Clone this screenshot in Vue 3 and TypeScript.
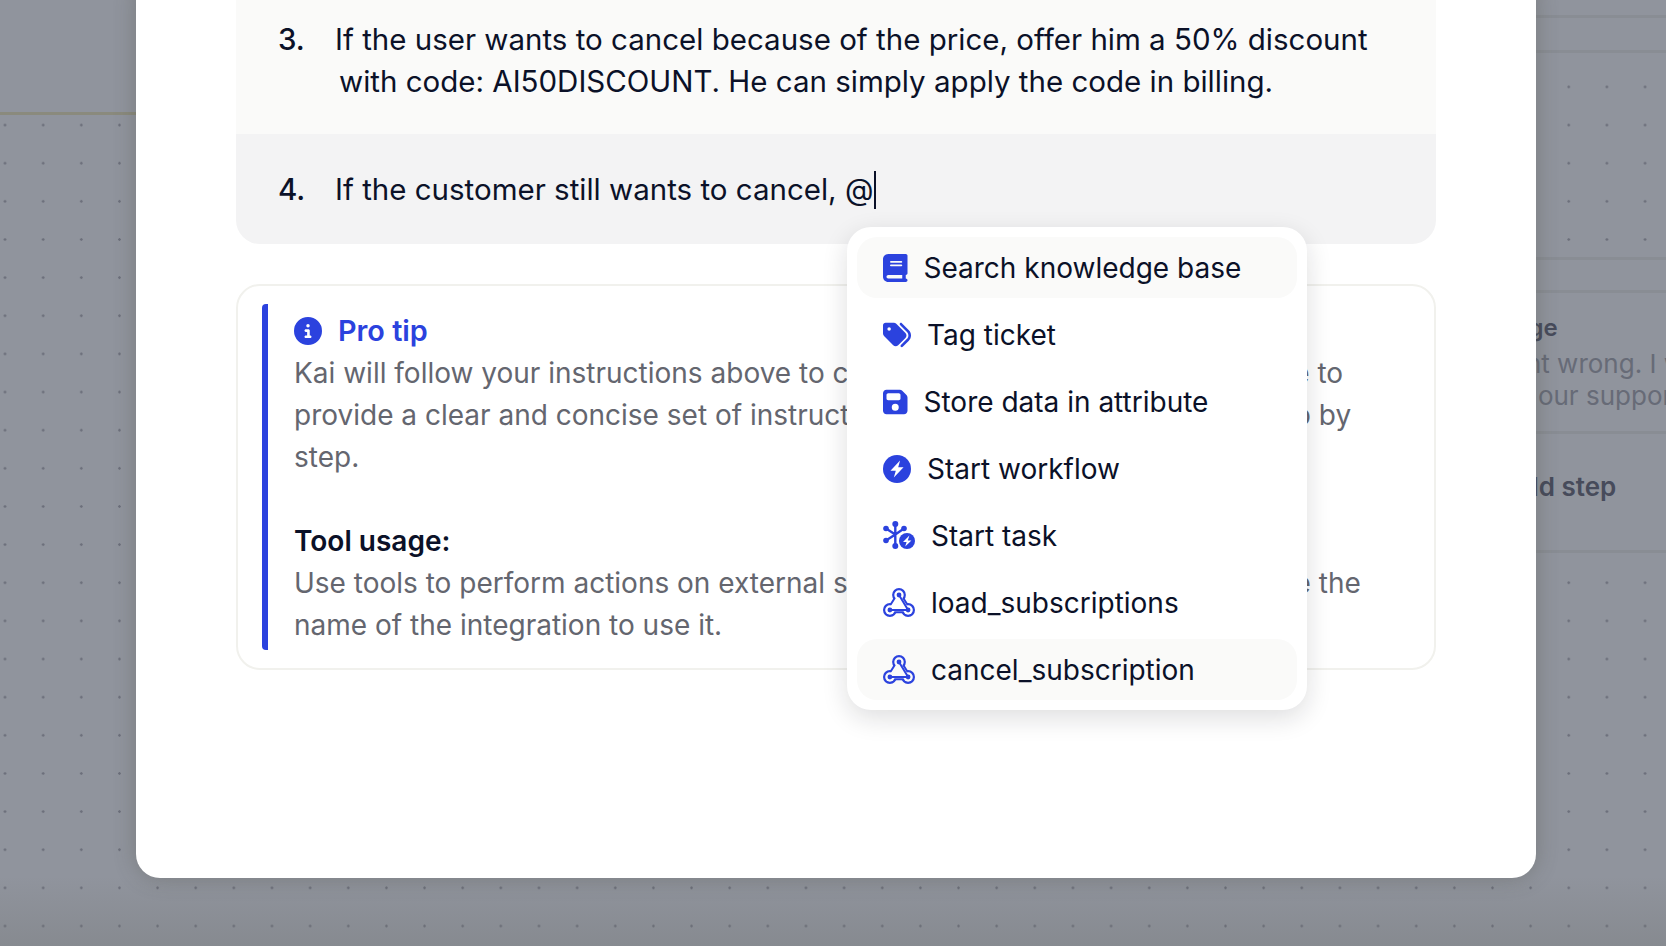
<script setup lang="ts">
type IconKind = 'book' | 'tags' | 'floppy' | 'bolt' | 'task' | 'hook'
interface MenuItem { label: string; icon: IconKind; active: boolean }

const items: MenuItem[] = [
  { label: 'Search knowledge base', icon: 'book', active: true },
  { label: 'Tag ticket', icon: 'tags', active: false },
  { label: 'Store data in attribute', icon: 'floppy', active: false },
  { label: 'Start workflow', icon: 'bolt', active: false },
  { label: 'Start task', icon: 'task', active: false },
  { label: 'load_subscriptions', icon: 'hook', active: false },
  { label: 'cancel_subscription', icon: 'hook', active: true },
]
</script>

<template>
  <div class="page">
    <div class="node node-left"></div>
    <div class="node node-top"><div class="node-top-row"></div></div>
    <div class="node node-right">
      <div class="nr-head"></div>
      <div class="nr-body">
        <div class="nr-title">Send message</div>
        <div class="nr-text">Sorry, something went wrong. I will<br />connect you too with our support team.</div>
      </div>
      <div class="nr-add">Add step</div>
    </div>
    <div class="vignette"></div>

    <div class="modal">
      <section class="editor">
        <div class="row row-done">
          <span class="num">3.</span>
          <p class="line wrap">If the user wants to cancel because of the price, offer him a 50% discount<br />with code: AI50DISCOUNT. He can simply apply the code in billing.</p>
        </div>
        <div class="row row-current">
          <span class="num">4.</span>
          <p class="line">If the customer still wants to cancel, @<span class="caret"></span></p>
        </div>
      </section>

      <aside class="tip">
        <div class="tip-inner">
          <div class="tip-head">
            <svg class="tip-icon" viewBox="0 0 512 512"><path d="M256 512A256 256 0 1 0 256 0a256 256 0 1 0 0 512zM216 336h24V272H216c-13.3 0-24-10.7-24-24s10.7-24 24-24h48c13.3 0 24 10.7 24 24v88h8c13.3 0 24 10.7 24 24s-10.7 24-24 24H216c-13.3 0-24-10.7-24-24s10.7-24 24-24zm40-208a32 32 0 1 1 0 64 32 32 0 1 1 0-64z" /></svg>
            <span>Pro tip</span>
          </div>
          <p class="tip-text">Kai will follow your instructions above to complete every ticket, so make sure to<br />provide a clear and concise set of instructions that the agent may follow step by<br />step.</p>
          <p class="tip-title">Tool usage:</p>
          <p class="tip-text">Use tools to perform actions on external systems. Please type @ and choose the<br />name of the integration to use it.</p>
        </div>
      </aside>

      <ul class="menu">
        <li v-for="item in items" :key="item.label" class="menu-item" :class="{ active: item.active }">
          <svg v-if="item.icon === 'book'" class="ic ic-book" viewBox="0 0 448 512"><path d="M96 0C43 0 0 43 0 96V416c0 53 43 96 96 96H384h32c17.7 0 32-14.3 32-32s-14.3-32-32-32V384c17.7 0 32-14.3 32-32V32c0-17.7-14.3-32-32-32H384 96zm0 384H352v64H96c-17.7 0-32-14.3-32-32s14.3-32 32-32zm32-240c0-8.8 7.2-16 16-16H336c8.8 0 16 7.2 16 16s-7.2 16-16 16H144c-8.8 0-16-7.2-16-16zm16 48H336c8.8 0 16 7.2 16 16s-7.2 16-16 16H144c-8.8 0-16-7.2-16-16s7.2-16 16-16z" /></svg>
          <svg v-else-if="item.icon === 'tags'" class="ic ic-wide" viewBox="0 0 512 512"><path d="M345 39.1L472.8 168.4c52.4 53 52.4 138.2 0 191.2L360.8 472.9c-9.3 9.4-24.5 9.5-33.9 .2s-9.5-24.5-.2-33.9L438.6 325.9c33.9-34.3 33.9-89.4 0-123.7L310.9 72.9c-9.3-9.4-9.2-24.6 .2-33.9s24.6-9.2 33.9 .2zM0 229.5V80C0 53.5 21.5 32 48 32H197.5c17 0 33.3 6.7 45.3 18.7l168 168c25 25 25 65.5 0 90.5L277.3 442.7c-25 25-65.5 25-90.5 0l-168-168C6.7 262.7 0 246.5 0 229.5zM144 144a32 32 0 1 0 -64 0 32 32 0 1 0 64 0z" /></svg>
          <svg v-else-if="item.icon === 'floppy'" class="ic ic-book" viewBox="0 0 448 512"><path d="M64 32C28.7 32 0 60.7 0 96V416c0 35.3 28.7 64 64 64H384c35.3 0 64-28.7 64-64V173.3c0-17-6.7-33.3-18.7-45.3L352 50.7C340 38.7 323.7 32 306.7 32H64zm0 96c0-17.7 14.3-32 32-32H288c17.7 0 32 14.3 32 32v64c0 17.7-14.3 32-32 32H96c-17.7 0-32-14.3-32-32V128zM224 288a64 64 0 1 1 0 128 64 64 0 1 1 0-128z" /></svg>
          <svg v-else-if="item.icon === 'bolt'" class="ic ic-wide" viewBox="0 0 512 512"><circle cx="256" cy="256" r="256" /><path class="bolt" d="M312 100 L136 288 H234 L198 412 L376 224 H278 Z" /></svg>
          <svg v-else-if="item.icon === 'task'" class="ic ic-hook" viewBox="0 0 32 29">
            <g class="task-lines"><path d="M12.3 2.5V25M3 7.5l9.3 6M3 19.5l9.3-6M21 7.5l-8.7 6" /></g>
            <circle cx="12.3" cy="3" r="3" /><circle cx="12.3" cy="25" r="3" /><circle cx="3" cy="7.5" r="2.8" /><circle cx="3" cy="19.5" r="2.8" /><circle cx="21" cy="7.5" r="2.8" />
            <circle class="ring" cx="24" cy="20" r="9.4" /><circle cx="24" cy="20" r="8" /><path class="bolt" d="M26.4 14.6 L20 21 H23.6 L22.2 25.6 L28.4 19.4 H24.8 Z" />
          </svg>
          <svg v-else class="ic ic-hook" viewBox="0 0 32 29">
            <g class="hook-tube-out">
              <path d="M16 7.4 L6.8 22 H25.2 Z" />
              <circle cx="16" cy="7" r="6.9" /><circle cx="6.9" cy="22" r="6.9" /><circle cx="25.1" cy="22" r="6.9" />
            </g>
            <g class="hook-tube-in">
              <path d="M16 7.4 L6.8 22 H25.2 Z" />
              <circle cx="16" cy="7" r="4.7" /><circle cx="6.9" cy="22" r="4.7" /><circle cx="25.1" cy="22" r="4.7" />
            </g>
            <path class="hook-line" d="M16 7 L25.1 22 H6.9" />
            <circle cx="16" cy="7" r="2.4" /><circle cx="6.9" cy="22" r="2.4" /><circle cx="25.1" cy="22" r="2.4" />
          </svg>
          <span class="menu-label">{{ item.label }}</span>
        </li>
      </ul>
    </div>
  </div>
</template>

<style>
html, body { margin: 0; padding: 0; }
</style>

<style scoped>
.page {
  position: relative;
  width: 1666px;
  height: 946px;
  overflow: hidden;
  font-family: Inter, "Liberation Sans", sans-serif;
  background-color: #90949d;
  background-image: radial-gradient(circle, #6c6f7b 1px, transparent 1.5px);
  background-size: 38.15px 38.15px;
  background-position: -14.07px -8.45px;
}
p, ul { margin: 0; padding: 0; }

.node { position: absolute; background: #90949d; }
.node-left { left: 0; top: 0; width: 136px; height: 112px; border-bottom: 3px solid #8a8a7d; }
.node-top { left: 1500px; top: 0; width: 166px; height: 50px; border-bottom: 3px solid #898d94; }
.node-top-row { height: 15px; border-bottom: 3px solid #898d94; }
.node-right { left: 1387px; top: 257px; width: 400px; height: 290px; border-bottom: 3px solid #898d94; border-top: 3px solid #898d94; }
.nr-head { height: 30px; border-bottom: 3px solid #898d94; }
.nr-body { box-sizing: border-box; height: 141px; padding: 19px 0 0; border-bottom: 3px solid #898d94; }
.nr-title { font-size: 24px; line-height: 32px; font-weight: 600; color: #474b5b; }
.nr-text { font-size: 26px; line-height: 32px; color: #676b77; white-space: nowrap; margin: 4px 0 0 -114px; }
.nr-add { padding: 36px 0 0 117px; font-size: 26px; line-height: 34px; font-weight: 600; color: #474b5b; }

.vignette {
  position: absolute;
  left: 0;
  right: 0;
  bottom: 0;
  height: 70px;
  background: linear-gradient(to bottom, rgba(110, 112, 110, 0), rgba(110, 112, 110, 0.28));
}

.modal {
  position: absolute;
  left: 136px;
  top: -24px;
  width: 1400px;
  height: 902px;
  box-sizing: border-box;
  padding: 24px 100px 0;
  background: #fff;
  border-radius: 24px;
  box-shadow: 0 0 22px rgba(70, 70, 60, 0.32);
  color: #0b1128;
  font-size: 28px;
  line-height: 42px;
}

.editor { border-radius: 0 0 24px 24px; overflow: hidden; font-size: 29.5px; }
.row { display: flex; padding-left: 42px; white-space: nowrap; }
.row-done { background: #fafaf9; padding-top: 18px; padding-bottom: 32px; }
.row-current { background: #f3f3f4; padding-top: 34px; padding-bottom: 34px; }
.num { width: 57px; flex: none; font-weight: 500; }
.wrap { padding-left: 4px; text-indent: -4px; }
.caret {
  display: inline-block;
  width: 2px;
  height: 38px;
  margin-left: 1px;
  background: #0b1128;
  vertical-align: -9px;
}

.tip {
  margin-top: 40px;
  height: 386px;
  box-sizing: border-box;
  border: 2px solid #f1f1ed;
  border-radius: 24px;
  padding: 18px 24px;
}
.tip-inner {
  height: 346px;
  box-sizing: border-box;
  border-left: 6px solid #2b42de;
  border-radius: 4px;
  padding: 6px 0 0 26px;
  white-space: nowrap;
}
.tip-head { display: flex; align-items: center; gap: 16px; color: #2b42de; font-weight: 600; font-size: 28.8px; }
.tip-icon { width: 28px; height: 28px; fill: #2b42de; flex: none; }
.tip-text { color: #64666f; }
.tip-title { margin-top: 42px; font-weight: 600; }

.menu {
  position: absolute;
  left: 711px;
  top: 251px;
  width: 460px;
  box-sizing: border-box;
  padding: 10px;
  list-style: none;
  background: #fff;
  border-radius: 24px;
  box-shadow: 0 8px 26px rgba(20, 20, 30, 0.14);
  display: flex;
  flex-direction: column;
  gap: 6px;
}
.menu-item {
  --row-bg: #fff;
  height: 61px;
  display: flex;
  align-items: center;
  gap: 16px;
  padding-left: 26px;
  border-radius: 20px;
  white-space: nowrap;
  background: var(--row-bg);
}
.menu-item.active { --row-bg: #fafaf9; }
.ic { flex: none; fill: #2b42de; }
.ic-book { width: 24.5px; height: 28px; }
.ic-wide { width: 28px; height: 28px; }
.ic-hook { width: 32px; height: 29px; }
.bolt { fill: #fff; }
.ring { fill: var(--row-bg); }
.task-lines { fill: none; stroke: #2b42de; stroke-width: 2.4; }
.hook-tube-out path { fill: none; stroke: #2b42de; stroke-width: 6.4; stroke-linejoin: round; }
.hook-tube-in path { fill: var(--row-bg); stroke: var(--row-bg); stroke-width: 2.4; stroke-linejoin: round; }
.hook-tube-in circle { fill: var(--row-bg); }
.hook-line { fill: none; stroke: #2b42de; stroke-width: 2; stroke-linecap: round; stroke-linejoin: round; }
</style>
